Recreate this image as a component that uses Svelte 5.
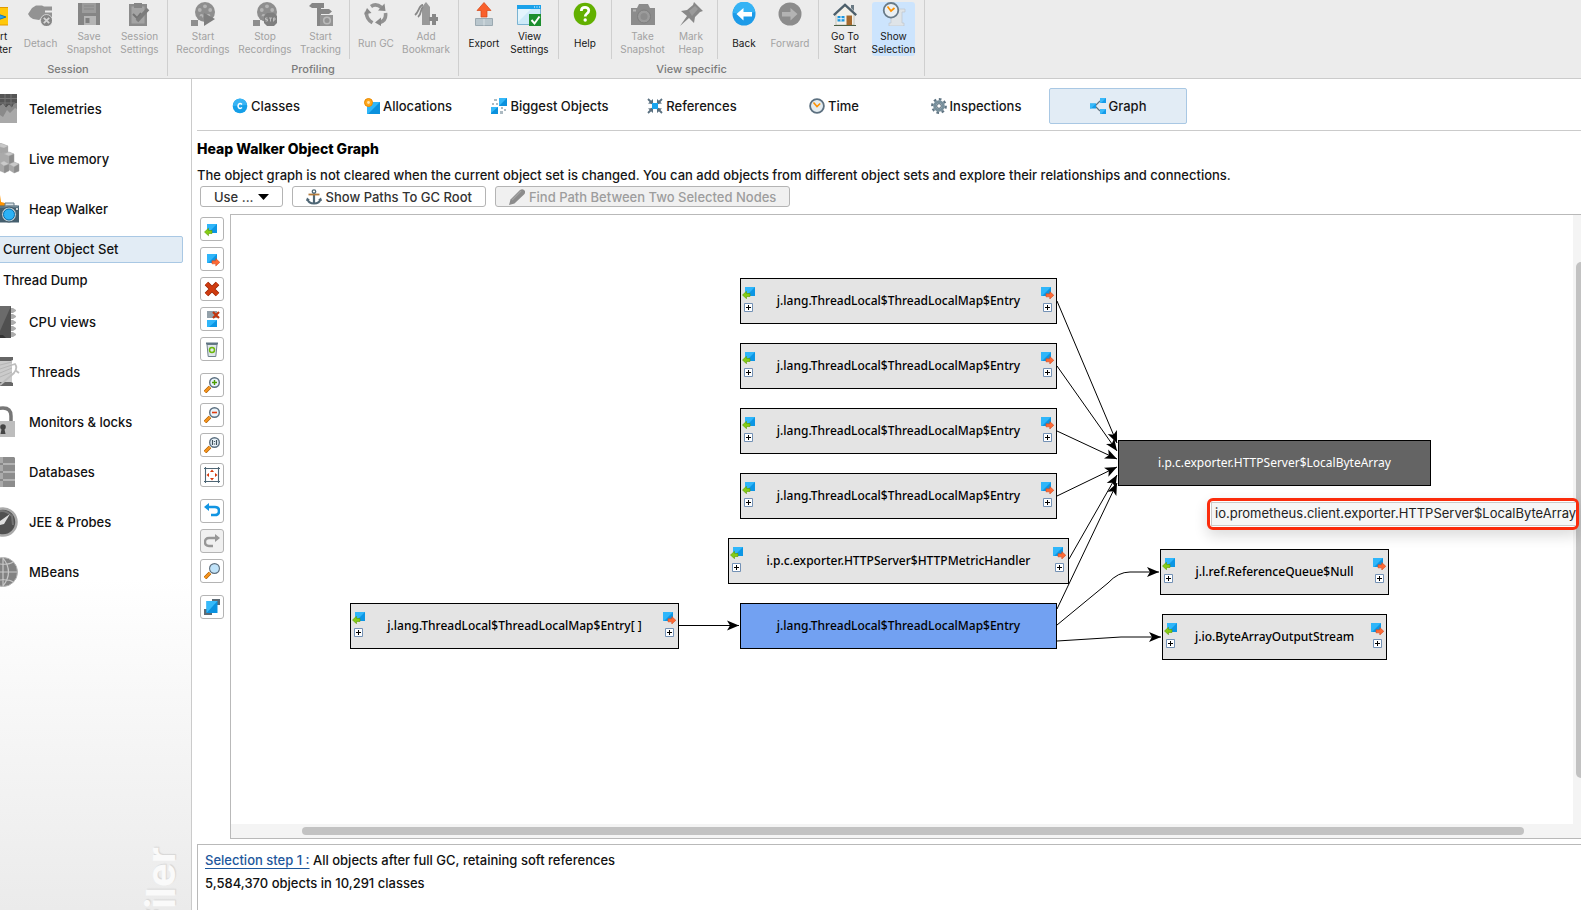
<script>
  const toolbar = [
    {
      title: 'Session',
      sections: [
        [
          { label: ['Start', 'Center'], icon: 'startCenter', width: 46 },
          { label: ['Detach'], icon: 'detach', width: 43, disabled: true },
          { label: ['Save', 'Snapshot'], icon: 'save', width: 54, disabled: true },
          { label: ['Session', 'Settings'], icon: 'settings', width: 47, disabled: true }
        ]
      ]
    },
    {
      title: 'Profiling',
      sections: [
        [
          { label: ['Start', 'Recordings'], icon: 'startRec', width: 62, disabled: true },
          { label: ['Stop', 'Recordings'], icon: 'stopRec', width: 62, disabled: true },
          { label: ['Start', 'Tracking'], icon: 'tracking', width: 49, disabled: true }
        ],
        [
          { label: ['Run GC'], icon: 'gc', width: 44, disabled: true },
          { label: ['Add', 'Bookmark'], icon: 'bookmark', width: 56, disabled: true }
        ]
      ]
    },
    {
      title: 'View specific',
      sections: [
        [
          { label: ['Export'], icon: 'export', width: 42 },
          { label: ['View', 'Settings'], icon: 'view', width: 49 }
        ],
        [{ label: ['Help'], icon: 'help', width: 44 }],
        [
          { label: ['Take', 'Snapshot'], icon: 'camera', width: 53, disabled: true },
          { label: ['Mark', 'Heap'], icon: 'pin', width: 44, disabled: true }
        ],
        [
          { label: ['Back'], icon: 'back', width: 44 },
          { label: ['Forward'], icon: 'forward', width: 48, disabled: true }
        ],
        [
          { label: ['Go To', 'Start'], icon: 'home', width: 44 },
          { label: ['Show', 'Selection'], icon: 'selection', width: 53, active: true }
        ]
      ]
    }
  ];

  const cubeArrowIn =
    '<path d="M3 0h10v9H3z" fill="#0c96e4"/><path d="M3 0h10l-8 8H3z" fill="#2fb6fa"/><path d="M.5 8l4-3.700v2.200H8v3H4.500v2.200z" fill="#86cc14" stroke="#5a9c00" stroke-width=".6"/>';
  const cubeArrowOut =
    '<path d="M0 0h10v9H0z" fill="#0c96e4"/><path d="M0 0h10L1 9H0z" fill="#2fb6fa"/><path d="M12.800 8.300l-4-3.700v2.200H5v3h3.800V12z" fill="#ff6a35" stroke="#d2481c" stroke-width=".6"/>';
  const lens =
    '<path d="M1 15l5-5" stroke="#a85c00" stroke-width="3.600"/><path d="M1 15l5-5" stroke="#f7941d" stroke-width="2.400"/><circle cx="10.500" cy="5.500" r="4.800" fill="#eaf4fb" stroke="#5c7080" stroke-width="1.400"/>';
  const reel =
    '<circle cx="14" cy="10" r="10" fill="#8e8e8e"/><g fill="#b4b4b4"><circle cx="14" cy="4.300" r="1.900"/><circle cx="8.800" cy="8" r="1.900"/><circle cx="19.200" cy="8" r="1.900"/><circle cx="10.500" cy="14" r="1.900"/><circle cx="17.500" cy="14" r="1.900"/></g><path d="M0 18h7v6H0z" fill="#8e8e8e"/><path d="M7 17l4-2" stroke="#8e8e8e" stroke-width="3"/>';
  const clock =
    '<circle cx="8" cy="8" r="6.900" fill="#e4ecf0" stroke="#5c7080" stroke-width="1.800"/><path d="M4.500 4.500L8 8.500l3.200-3" fill="none" stroke="#ff9100" stroke-width="1.600"/>';

  const icons = {
    startCenter:
      '<rect x="3" y="5.500" width="21.500" height="17.500" fill="#ffc80a" stroke="#e09a00"/><path d="M8 10l14 5-14 5z" fill="#2aa6ee" stroke="#1478b8"/>',
    detach:
      '<path d="M0 12l4-6 4-2.500h6l2 1h8v4h-7v2h7v4.500H15l-4 3-6-1-3-2z" fill="#939393"/><circle cx="18.500" cy="18.500" r="6" fill="#868686" stroke="#ececec" stroke-width=".7"/><path d="M15.800 15.800l5.400 5.400m0-5.400l-5.400 5.400" stroke="#d5d5d5" stroke-width="1.800"/>',
    save:
      '<path d="M1 1h22v22H1z" fill="#858585"/><path d="M5 1h14v10H5z" fill="#9c9c9c"/><path d="M7 4h10M7 7h10" stroke="#888"/><path d="M7 14h12v9H7z" fill="#b5b5b5"/><path d="M8.500 16h4v5h-4z" fill="#808080"/>',
    settings:
      '<path d="M2 2h18v22H2z" fill="#8b8b8b"/><path d="M4.500 4.500h13v17h-13z" fill="#a4a4a4"/><path d="M7 1h8v5H7z" fill="#858585"/><path d="M6 12l4 4 4-5" fill="none" stroke="#747474" stroke-width="2"/><path d="M10 19l11-12" stroke="#7c7c7c" stroke-width="3.500"/>',
    startRec: reel + '<path d="M13 11l11 6-11 7z" fill="#7e7e7e"/>',
    stopRec:
      reel +
      '<path d="M14 11h7l3 3v7l-3 3h-7l-3-3v-7z" fill="#7e7e7e"/><path d="M14.500 16h-2v1.500h2V19h-2m3.500-3h3m-1.500 0v3.500m3 0V16h1.500v2h-1.500" stroke="#bcbcbc" fill="none"/>',
    tracking:
      '<path d="M0 4l3-3h12v5H3zM12 7h8l3 2.500-3 2.500h-8zM8 6h4v18H8z" fill="#868686"/><path d="M11 13h13v11H11z" fill="#949494"/><circle cx="18" cy="18.500" r="3.300" fill="none" stroke="#bababa" stroke-width="1.600"/>',
    gc: '<g fill="none" stroke="#929292" stroke-width="3.600"><path d="M7 4.500Q12 1 17.500 5.500M21.500 11Q22.500 18.500 16 20.500M2.500 10Q2 17 8.500 20.800"/></g><path d="M14 8.500l7.500.5-1-7.500zM17 15.500l-6 5 6 3.500zM7.500 11L3 6l-3 6.500z" fill="#8a8a8a"/>',
    bookmark:
      '<path d="M8 5l4-5 4 5v18H8z" fill="#999"/><path d="M9 3C5 3 5 10 1 13M9 5c-3 2-1 7-5 10" fill="none" stroke="#888" stroke-width="1.800"/><path d="M15 15h3v-3h4v3h3v4h-3v4h-4v-4h-3z" fill="#878787"/>',
    export:
      '<path d="M3.500 16.500h17v7h-17z" fill="#b9c6cd" stroke="#9ba9b1"/><path d="M12 17v6.500" stroke="#d8e0e4"/><path d="M12 .5l7 8h-4V15H9V8.500H5z" fill="#f9602c" stroke="#d64515" stroke-width=".7"/>',
    view: '<path d="M.5 3.500h23v19H.5z" fill="#cdeaf8" stroke="#7ab3d2"/><path d="M0 3h24v4H0z" fill="#1ba2ea"/><path d="M17 5h1m1.500 0h1m1.500 0h1" stroke="#fff"/><path d="M14 7l-13 13V7z" fill="#e4f5fd"/><path d="M12 12h12v12H12z" fill="#1c8e2e"/><path d="M14.500 18l3 3.500 5-7" fill="none" stroke="#fff" stroke-width="2"/>',
    help: '<circle cx="12" cy="12" r="11.300" fill="#62b000"/><path d="M8.300 9c0-5 7.500-4.500 7.500-.5 0 3-3.600 3-3.600 6" fill="none" stroke="#fff" stroke-width="2.700"/><circle cx="12.200" cy="18" r="1.700" fill="#fff"/>',
    camera:
      '<path d="M0 6h6l2-4h9l2 4h5v17H0z" fill="#8c8c8c"/><circle cx="13" cy="14.500" r="6.500" fill="#9b9b9b" stroke="#7e7e7e"/><circle cx="13" cy="14.500" r="3.500" fill="#8c8c8c"/><path d="M2 8.500h3" stroke="#b5b5b5" stroke-width="2"/>',
    pin: '<path d="M15 0l9 9-3 1-5 5-1 6-5-5-9 8 7-10-6-5 6-1 6-5z" fill="#888"/><path d="M10 9l6-5 3 3-6 7z" fill="#9b9b9b"/>',
    back: '<circle cx="12" cy="12" r="11.500" fill="#1d9be8"/><path d="M1 11a11 11 0 0 1 22-1l-8 2z" fill="#35b3f5"/><path d="M4.500 12l7-6v4H20v4.500h-8.500v4z" fill="#fff"/>',
    forward:
      '<circle cx="12" cy="12" r="11.500" fill="#8c8c8c"/><path d="M19.500 12l-7-6v4H4v4.500h8.500v4z" fill="#b3b3b3"/>',
    home: '<path d="M3 11l9-8 9 8v12H3z" fill="#f4f1e9" stroke="#a8a8a0" stroke-width=".6"/><path d="M.8 13.200L12 2.800l11.200 10.400" fill="none" stroke="#4d5f6b" stroke-width="2.300"/><path d="M18 3h3v6l-3-3z" fill="#6b7a84"/><path d="M4.500 14h7v5.500h-7z" fill="#1d97df"/><path d="M8 14v5.500M4.500 16.700h7" stroke="#fff" stroke-width=".9"/><path d="M13.500 13.500H19V23h-5.500z" fill="#a5682c"/><path d="M1 23.500h22" stroke="#4e5f45"/>',
    selection:
      '<path d="M9 7h14v3h-3v11h2v3H7v-3h2z" fill="#dfe4e8" stroke="#bec6cc" stroke-width=".7"/><circle cx="9" cy="8.300" r="7.300" fill="#eaf0f4" stroke="#687a88" stroke-width="1.800"/><path d="M5.500 4.500L9 9l3.500-3" fill="none" stroke="#ff9100" stroke-width="1.700"/>',

    telemetries:
      '<path d="M0 1h17v29H0z" fill="#a9a9a9"/><path d="M0 1h17v9l-3 1-2 4-3-3-3 3-3-4-3 2z" fill="#555"/><path d="M0 5.500h17M0 10h15M5 1v12m6-12v13" stroke="#777"/><path d="M0 22l3 2 4-7 3 3 5-5 2 1v-6l-3 1-2 4-3-3-3 3-3-4-3 2z" fill="#8a8a8a"/>',
    memory:
      '<g stroke="#aaa" stroke-width=".3"><path d="M0 0l8 3v8l-8 3z" fill="#a5a5a5"/><path d="M0 0l8 3-4 2-4-1z" fill="#c8c8c8"/><path d="M0 10l9-1 5 2v9l-5 3-9-3z" fill="#aaa"/><path d="M4 11l5-2 5 2-5 2z" fill="#c8c8c8"/><path d="M0 20l5-2 5 3 4-2 5 2v7l-5 2-5-3-4 3-5-2z" fill="#a7a7a7"/><path d="M9 21l5-2 5 2-5 3zM0 20l4-2 5 3-5 2z" fill="#cacaca"/><path d="M14 24l5-3v7l-5 2zM9 13l5-2v8l-5 2zM4 23l5-2v7l-5 2z" fill="#8c8c8c"/></g>',
    heap: '<path d="M0 2l1 7 4 1v3l-5 3z" fill="#ff9300"/><path d="M0 12.500h19v17H0z" fill="#455f6e"/><path d="M5 10h9v3H5z" fill="#dae2e6" stroke="#627885"/><path d="M0 13.500h4l3-1h10l2 2H0z" fill="#748a96"/><circle cx="9" cy="21.500" r="7.500" fill="#b8c8d0" stroke="#3e5563"/><circle cx="9" cy="21.500" r="5.500" fill="#2cb2f6" stroke="#0870ae"/><path d="M16 16h2" stroke="#fff" stroke-width="1.500"/>',
    cpu: '<g fill="#adadad"><path d="M11 2h2l3 2v1l-3 2h-2zM11 8h2l3 2v1l-3 2h-2zM11 14h2l3 2v1l-3 2h-2zM11 20h2l3 2v1l-3 2h-2zM11 26h2l3 2v1l-3 2h-2z"/></g><path d="M0 0h11v32H0z" fill="#505050"/><path d="M0 0h11L0 25z" fill="#6b6b6b"/><path d="M0 29h3l3 3H0z" fill="#343434"/>',
    threads:
      '<path d="M0 5h12v22H0z" fill="#cbcbcb"/><path d="M0 9l12-3M0 13l12-4M0 17l12-5M0 21l12-5" stroke="#b5b5b5"/><path d="M0 1h13v3l-2 1H0zM0 26h11l2 1v3H0z" fill="#666"/><path d="M0 29L14 17q4-5 1-9l-3 1m3 5l4 3" fill="none" stroke="#bdbdbd" stroke-width="1.800"/>',
    locks:
      '<path d="M-6 15V8Q-5 2 3 2q8 0 8 8v5" fill="none" stroke="#777" stroke-width="3.500"/><path d="M0 15h15v16H0z" fill="#bdbdbd"/><circle cx="3" cy="21" r="2.800" fill="#444"/><path d="M2 21h2l1.500 7h-5z" fill="#444"/>',
    databases:
      '<path d="M0 1h14l1 1v5H0zM0 9h15v6H0zM0 17h15v6H0zM0 25h15v6H0z" fill="#8c8c8c"/><path d="M0 1h3v30H0z" fill="#aaa"/><path d="M0 8h15M0 16h15M0 24h15" stroke="#666"/>',
    probes:
      '<circle cx="3" cy="16" r="13.500" fill="#505050" stroke="#aaa" stroke-width="2.500"/><path d="M-6 8q9-7 18 2l1 9" fill="none" stroke="#747474" stroke-width="2"/><path d="M0 15l10-7-6 10-4 1z" fill="#dedede"/>',
    mbeans:
      '<circle cx="3" cy="16" r="14.500" fill="#838383" stroke="#b4b4b4"/><g fill="none" stroke="#c7c7c7" stroke-width="1.200"><path d="M3 1v30M0 16h17M0 8q9 1 13-2M0 24q9-1 13 2M3 2q11 14 0 28"/></g>',

    classes:
      '<circle cx="8" cy="8" r="7.300" fill="#149fe8"/><path d="M1 8a7 7 0 0 1 14-1z" fill="#38b4f4"/><path d="M10 6.500q-2-1.800-3.500 0-1 1.500 0 3 1.500 1.800 3.500 0" fill="none" stroke="#fff" stroke-width="1.500"/>',
    allocations:
      '<path d="M3 4h13v12H3z" fill="#0b91dd"/><path d="M3 4h13L4 16H3z" fill="#2fb6f8"/><circle cx="4.500" cy="4.500" r="4" fill="#ffa61a" stroke="#e88900"/><circle cx="4.500" cy="4.500" r="1.400" fill="#ffe6b0"/>',
    biggest:
      '<path d="M8 0h8v8H8zM0 9h7v7H0z" fill="#0b91dd"/><path d="M8 0h8L8 8zM0 9h7l-7 6z" fill="#35b8f8"/><path d="M3 1h3v2H3zM1 5h2v2H1zM5 5h2v2H5zM10 9h2v2h-2zM13 11h2v2h-2zM9 13h3v3H9z" fill="#acbac2"/>',
    references:
      '<path d="M1 1l5 5m9-5l-5 5M1 15l5-5m9 5l-5-5" stroke="#5a7080" stroke-width="1.800"/><path d="M1 5.500L6 6V1zM15 5.500L10 6V1zM1 10.500l5-.5v5zM15 10.500l-5-.5v5z" fill="#5a7080"/><path d="M5 5h6v6H5z" fill="#1aa4ef"/>',
    time: clock,
    inspections:
      '<circle cx="8" cy="8" r="6.700" fill="none" stroke="#607583" stroke-width="2.400" stroke-dasharray="2.600 2.600"/><circle cx="8" cy="8" r="4.300" fill="#dfe8ed" stroke="#78909c" stroke-width="3"/><circle cx="8" cy="8" r="2.300" fill="#fff" stroke="#4f6472"/>',
    graph:
      '<path d="M5 8l5-5m-5 5l5 5" stroke="#5e7280" stroke-width="1.200"/><path d="M0 5.500h6v5H0zM10 0h6v5h-6zM10 11h6v5h-6z" fill="#159cea"/><path d="M0 5.500h6l-5 5H0zM10 0h6l-5 5h-1zM10 11h6l-5 5h-1z" fill="#3ab9f9"/>',
    anchor:
      '<path d="M8 4.500V14" stroke="#4e6675" stroke-width="2.200"/><path d="M2.500 5.500h11" stroke="#b37a3a" stroke-width="1.800"/><circle cx="8" cy="2.500" r="1.700" fill="none" stroke="#4e6675" stroke-width="1.300"/><path d="M1.500 10q1 4.500 6.500 4.500T14.500 10" fill="none" stroke="#4e6675" stroke-width="2"/><path d="M0 12l1-3.500 3 2.500zM16 12l-1-3.500-3 2.500z" fill="#4e6675"/>',
    pencil: '<path d="M0 16l1.500-5.500L11 1q3-2 5 1 .5 2-1 3.500l-9.500 9z" fill="#8c8c8c"/><path d="M3 11l9-9" stroke="#a3a3a3" stroke-width="1.200"/>',

    incoming: '<g transform="translate(0 3)">' + cubeArrowIn + '</g>',
    outgoing: '<g transform="translate(3 3)">' + cubeArrowOut + '</g>',
    remove:
      '<path d="M2.500 2.500l11 11m0-11l-11 11" stroke="#962505" stroke-width="5"/><path d="M2.500 2.500l11 11m0-11l-11 11" stroke="#cf3b10" stroke-width="3.600"/>',
    removeOther:
      '<path d="M3 0h10v7H3z" fill="#93a1aa"/><path d="M3 9h10v7H3z" fill="#0c96e4"/><path d="M3 9h10l-8 7H3z" fill="#2fb6fa"/><path d="M9 1l6 6m0-6L9 7" stroke="#c2350d" stroke-width="2.200"/>',
    trash:
      '<path d="M3 3.500h10l-1.200 12H4.200z" fill="#dfe6ea" stroke="#6e808c"/><path d="M2 1.500h12v2H2z" fill="#607583"/><circle cx="8" cy="9" r="2.500" fill="none" stroke="#6cb80c" stroke-width="1.500"/>',
    zoomIn: lens + '<path d="M8 5.500h5M10.500 3v5" stroke="#4c9e00" stroke-width="1.400"/>',
    zoomOut: lens + '<path d="M8 5.500h5" stroke="#e03c10" stroke-width="1.600"/>',
    zoomReset: lens + '<path d="M8.500 3v5M12.500 3v5M10.500 4v1m0 1.500v1" stroke="#40525e" stroke-width="1.200"/>',
    fit: '<path d="M1.500 0v16M14.500 0v16M0 1.500h16M0 14.500h16" stroke="#4e6675" stroke-width="1.100" fill="none"/><path d="M8 2.500l2 2.500H6zM8 13.500L6 11h4zM2.500 8L5 6v4zM13.500 8L11 10V6z" fill="#d63a0c"/>',
    undo: '<path d="M2 4h9q4 0 4 4t-4 4H7" fill="none" stroke="#1295e2" stroke-width="2.600"/><path d="M0 4l5-4v8z" fill="#1295e2"/>',
    redo: '<path d="M14 5H5Q1 5 1 9t4 4h4" fill="none" stroke="#979797" stroke-width="2.400"/><path d="M16 5l-5-4v8z" fill="#979797"/>',
    find: lens + '<circle cx="10.500" cy="5.500" r="4" fill="#bfe3fa"/>',
    overview:
      '<path d="M8 0h8v6H8zM0 10h8v6H0z" fill="#5d6b75"/><path d="M2.500 2h11v12h-11z" fill="#0a92e0"/><path d="M2.500 2h11l-11 12z" fill="#35bafa"/>'
  };

  const navigation = [
    { label: 'Telemetries', icon: 'telemetries' },
    { label: 'Live memory', icon: 'memory' },
    { label: 'Heap Walker', icon: 'heap', children: ['Current Object Set', 'Thread Dump'] },
    { label: 'CPU views', icon: 'cpu' },
    { label: 'Threads', icon: 'threads' },
    { label: 'Monitors & locks', icon: 'locks' },
    { label: 'Databases', icon: 'databases' },
    { label: 'JEE & Probes', icon: 'probes' },
    { label: 'MBeans', icon: 'mbeans' }
  ];

  const tabs = [
    ['Classes', 'classes'],
    ['Allocations', 'allocations'],
    ['Biggest Objects', 'biggest'],
    ['References', 'references'],
    ['Time', 'time'],
    ['Inspections', 'inspections'],
    ['Graph', 'graph']
  ];

  const graphTools = [
    [
      ['incoming', 'Show incoming'],
      ['outgoing', 'Show outgoing'],
      ['remove', 'Remove'],
      ['removeOther', 'Remove others'],
      ['trash', 'Clear']
    ],
    [
      ['zoomIn', 'Zoom in'],
      ['zoomOut', 'Zoom out'],
      ['zoomReset', 'Actual size'],
      ['fit', 'Fit']
    ],
    [
      ['undo', 'Undo'],
      ['redo', 'Redo'],
      ['find', 'Find']
    ],
    [['overview', 'Overview']]
  ];

  const entry = 'j.lang.ThreadLocal$ThreadLocalMap$Entry';
  const nodes = [
    { x: 509, y: 63, w: 317, label: entry },
    { x: 509, y: 128, w: 317, label: entry },
    { x: 509, y: 193, w: 317, label: entry },
    { x: 509, y: 258, w: 317, label: entry },
    { x: 497, y: 323, w: 341, label: 'i.p.c.exporter.HTTPServer$HTTPMetricHandler' },
    { x: 119, y: 388, w: 329, label: entry + '[ ]' },
    { x: 509, y: 388, w: 317, label: entry, kind: 'selected' },
    { x: 887, y: 225, w: 313, label: 'i.p.c.exporter.HTTPServer$LocalByteArray', kind: 'target' },
    { x: 929, y: 334, w: 229, label: 'j.l.ref.ReferenceQueue$Null' },
    { x: 931, y: 399, w: 225, label: 'j.io.ByteArrayOutputStream' }
  ];

  const edges = [
    'M826 86L886 228',
    'M826 151L886 236',
    'M826 216L886 244',
    'M826 281L886 252',
    'M838 344L886 260',
    'M826 394L886 268',
    'M826 410L877 368Q887 357 899 357L928 357',
    'M826 426L890 422L930 422',
    'M448 410.500L508 410.500'
  ];
</script>

{#snippet icon(name, width = 16, height = width)}
  <svg {width} {height} viewBox="0 0 {width} {height}" aria-hidden="true">{@html icons[name]}</svg>
{/snippet}

{#snippet port(cube)}
  <span class="port">
    <svg width="13" height="12" viewBox="0 0 13 12" aria-hidden="true">{@html cube}</svg>
    <svg width="9" height="9" viewBox="0 0 9 9" aria-hidden="true"><path d="M.5.5h8v8h-8z" fill="#fff" stroke="#7391b5" /><path d="M2 4.500h5M4.500 2v5" stroke="#000" /></svg>
  </span>
{/snippet}

<div class="app">
  <header class="toolbar">
    {#each toolbar as group}
      <div class="group">
        <div class="sections">
          {#each group.sections as section}
            <div class="section">
              {#each section as item}
                <button class="tool" class:active={item.active} disabled={item.disabled} style="width: {item.width}px">
                  <span class="face">
                    {@render icon(item.icon, 24)}
                    <span class="caption">
                      {#each item.label as line}<span>{line}</span>{/each}
                    </span>
                  </span>
                </button>
              {/each}
            </div>
          {/each}
        </div>
        <div class="group-title">{group.title}</div>
      </div>
    {/each}
  </header>

  <div class="body">
    <nav class="sidebar">
      {#each navigation as item}
        <a class="nav" href="#top">{@render icon(item.icon, 20, 32)}{item.label}</a>
        {#each item.children ?? [] as child, i}
          <a class="sub" class:current={i === 0} href="#top">{child}</a>
        {/each}
      {/each}
      <div class="brand">filer</div>
    </nav>

    <main>
      <div class="tabs">
        {#each tabs as [label, name]}
          <button class="tab" class:on={name === 'graph'}>{@render icon(name)}{label}</button>
        {/each}
      </div>

      <h1>Heap Walker Object Graph</h1>
      <p class="intro">
        The object graph is not cleared when the current object set is changed. You can add objects from different
        object sets and explore their relationships and connections.
      </p>
      <div class="actions">
        <button>Use ... <svg width="11" height="6" viewBox="0 0 11 6" aria-hidden="true"><path d="M0 0h11L5.500 6z" /></svg></button>
        <button>{@render icon('anchor')}Show Paths To GC Root</button>
        <button disabled>{@render icon('pencil')}Find Path Between Two Selected Nodes</button>
      </div>

      <div class="workspace">
        <div class="strip">
          {#each graphTools as group}
            <div class="strip-group">
              {#each group as [name, label]}
                <button aria-label={label} disabled={name === 'redo'}>{@render icon(name)}</button>
              {/each}
            </div>
          {/each}
        </div>

        <div class="canvas">
          <svg class="edges" aria-hidden="true">
            <defs>
              <marker id="arrow" markerWidth="12" markerHeight="12" refX="12" refY="6" orient="auto" markerUnits="userSpaceOnUse">
                <path d="M0 1L12 6L0 11L3 6z" />
              </marker>
            </defs>
            {#each edges as d}<path {d} fill="none" stroke="#000" marker-end="url(#arrow)" />{/each}
          </svg>
          {#each nodes as node}
            <div class="node {node.kind ?? ''}" style="left: {node.x}px; top: {node.y}px; width: {node.w}px">
              {#if !node.kind}{@render port(cubeArrowIn)}{/if}
              <span class="name">{node.label}</span>
              {#if !node.kind}{@render port(cubeArrowOut)}{/if}
            </div>
          {/each}
          <div class="vbar"><div class="vthumb"></div></div>
          <div class="hbar"><div class="hthumb"></div></div>
          <div class="tip"><div>io.prometheus.client.exporter.HTTPServer$LocalByteArray</div></div>
        </div>
      </div>

      <footer>
        <div><a href="#top">Selection step 1 :</a> All objects after full GC, retaining soft references</div>
        <div>5,584,370 objects in 10,291 classes</div>
      </footer>
    </main>
  </div>
</div>

<style>
  :global(body) {
    overflow: hidden;
  }
  .app {
    height: 100vh;
    display: flex;
    flex-direction: column;
    overflow: hidden;
    background: #fff;
    color: #161616;
    font: 500 13px/20px Inter, sans-serif;
  }
  .app :global(svg) {
    display: block;
    flex: none;
  }
  button {
    font: inherit;
    color: inherit;
    margin: 0;
    padding: 0;
    border: 0;
    background: none;
  }
  .toolbar {
    display: flex;
    flex: none;
    background: #ececec;
    border-bottom: 1px solid #cbcbcb;
    padding-bottom: 2px;
  }
  .toolbar .group:first-child {
    margin-left: -31px;
  }
  .group {
    flex: none;
    border-right: 1px solid #cfcfcf;
  }
  .sections {
    display: flex;
  }
  .section {
    display: flex;
    padding: 2px 4px;
    height: 55px;
  }
  .section + .section {
    border-left: 1px solid #cfcfcf;
  }
  .tool {
    display: flex;
    justify-content: center;
    font-size: 10px;
    font-weight: 400;
    line-height: 13px;
  }
  .face {
    display: flex;
    flex-direction: column;
    align-items: center;
    gap: 4px;
    height: 54px;
    border-radius: 3px;
  }
  .active .face {
    background: #cce4fd;
  }
  .caption {
    display: flex;
    flex-direction: column;
    justify-content: center;
    height: 26px;
    text-align: center;
    white-space: nowrap;
  }
  .tool:disabled {
    color: #a2a2a2;
  }
  .group-title {
    padding-top: 3px;
    text-align: center;
    font-size: 11px;
    line-height: 14px;
    color: #7b7b7b;
  }
  .body {
    flex: 1;
    min-height: 0;
    display: flex;
  }
  .sidebar {
    position: relative;
    flex: none;
    width: 191px;
    padding-top: 5px;
    box-sizing: border-box;
    overflow: hidden;
    background: linear-gradient(#fff 0, #fff 60%, #ebebeb 100%);
  }
  .nav,
  .sub {
    display: flex;
    align-items: center;
    color: #111;
    text-decoration: none;
  }
  .nav {
    height: 50px;
    gap: 9px;
  }
  .sub {
    height: 34px;
    padding-left: 3px;
  }
  .sub.current {
    height: 23px;
    margin: 2px 8px 0 -4px;
    padding: 0 0 2px 6px;
    border: 1px solid #a9c8e4;
    border-radius: 2px;
    background: #e2ecf5;
  }
  .brand {
    position: absolute;
    right: 6px;
    top: 768px;
    writing-mode: vertical-rl;
    transform: rotate(180deg);
    font-size: 40px;
    line-height: 48px;
    font-weight: 700;
    color: #fafafa;
    text-shadow: 1px 1px 1px #d6d6d6;
  }
  main {
    flex: 1;
    min-width: 0;
    display: flex;
    flex-direction: column;
    padding-left: 5px;
    border-left: 1px solid #cbcbcb;
  }
  .tabs {
    display: flex;
    gap: 4px;
    padding: 9px 0 6px;
    border-bottom: 1px solid #cbcbcb;
  }
  .tab {
    display: flex;
    align-items: center;
    justify-content: center;
    gap: 3px;
    width: 138px;
    height: 36px;
    border: 1px solid transparent;
    border-radius: 2px;
  }
  .tab.on {
    background: #e2ecf5;
    border-color: #a9c8e4;
  }
  h1 {
    margin: 8px 0 0;
    font-size: 14px;
    line-height: 20px;
    font-weight: 800;
    color: #000;
  }
  .intro {
    margin: 6px 0 0;
    white-space: nowrap;
  }
  .actions {
    display: flex;
    gap: 9px;
    padding: 1px 3px 7px;
  }
  .actions button {
    display: flex;
    align-items: center;
    justify-content: center;
    gap: 4px;
    height: 21px;
    padding: 0 13px;
    border: 1px solid #b4b4b4;
    border-radius: 3px;
    background: #fff;
    color: #333;
    white-space: nowrap;
  }
  .actions button:disabled {
    background: #f0f0f0;
    color: #9d9d9d;
  }
  .workspace {
    flex: 1;
    min-height: 0;
    display: flex;
  }
  .strip {
    display: flex;
    flex-direction: column;
    gap: 12px;
    padding: 3px 6px 0 3px;
  }
  .strip-group {
    display: flex;
    flex-direction: column;
    gap: 6px;
  }
  .strip button {
    display: grid;
    place-items: center;
    width: 24px;
    height: 24px;
    border: 1px solid #b4b4b4;
    border-radius: 3px;
    background: #fff;
  }
  .strip button:disabled {
    background: #f0f0f0;
  }
  .canvas {
    position: relative;
    flex: 1;
    border: 1px solid #b9b9b9;
    border-right: 0;
  }
  .edges {
    position: absolute;
    width: 100%;
    height: 100%;
  }
  .node {
    position: absolute;
    display: flex;
    justify-content: center;
    box-sizing: border-box;
    height: 46px;
    border: 1px solid #000;
    background: #e4e4e4;
    color: #000;
    font: 500 12px/44px "Noto Sans", sans-serif;
  }
  .node.selected {
    background: #72a1f2;
  }
  .node.target {
    background: #646464;
    color: #fff;
    font-weight: 400;
  }
  .port {
    display: flex;
    flex: none;
    flex-direction: column;
    align-items: center;
    gap: 4px;
    padding: 8px 2px 0 1px;
  }
  .name {
    flex: 1;
    text-align: center;
    white-space: nowrap;
  }
  .vbar {
    position: absolute;
    top: 0;
    right: 0;
    bottom: 14px;
    width: 8px;
    background: #f4f4f4;
  }
  .vthumb {
    height: 516px;
    margin: 47px 0 0 3px;
    border-radius: 5px 0 0 5px;
    background: #c2c2c2;
  }
  .hbar {
    position: absolute;
    left: 0;
    right: 0;
    bottom: 0;
    height: 14px;
    background: #f4f4f4;
  }
  .hthumb {
    height: 8px;
    margin: 3px 57px 0 71px;
    border-radius: 4px;
    background: #c2c2c2;
  }
  .tip {
    position: absolute;
    left: 976px;
    top: 283px;
    padding: 1px 0 1px 1px;
    border: 3px solid #fb2c0c;
    border-radius: 6px;
    background: #fff;
    box-shadow: 0 6px 14px rgba(0, 0, 0, 0.14);
    color: #222;
    font-weight: 400;
    white-space: nowrap;
  }
  .tip div {
    padding: 0 0 2px 3px;
    border: 1px solid #cacaca;
    border-right: 0;
    background: #f6f6f6;
  }
  footer {
    flex: none;
    height: 58px;
    margin-top: 5px;
    padding: 4px 7px 3px;
    border: 1px solid #b9b9b9;
    border-width: 1px 0 0 1px;
    line-height: 23px;
    color: #111;
  }
  footer a {
    color: #1d579c;
    text-underline-offset: 3px;
  }
</style>
